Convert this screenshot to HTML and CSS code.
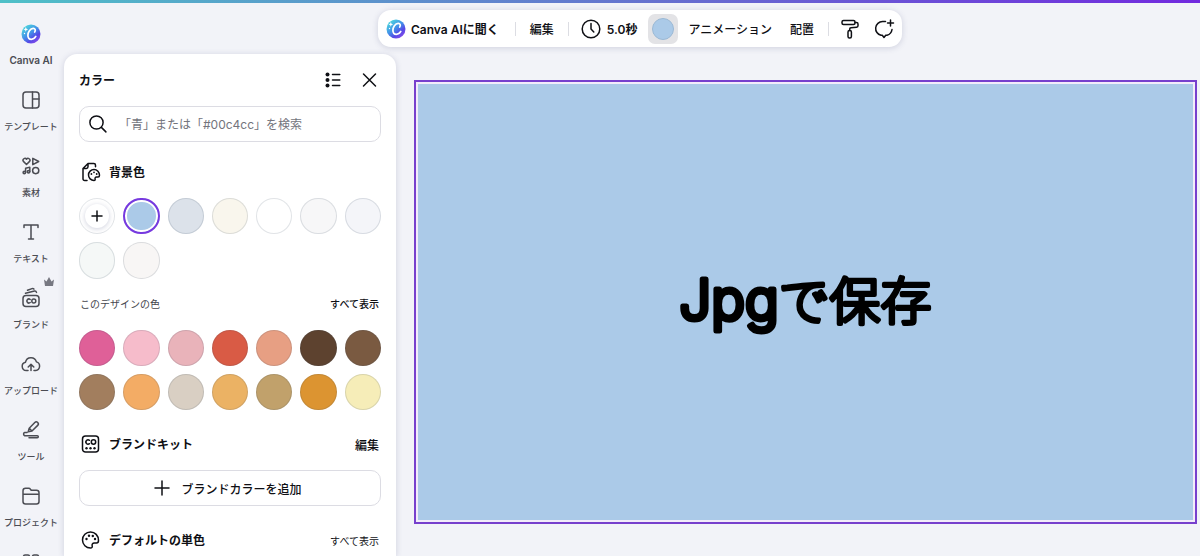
FILE: index.html
```html
<!DOCTYPE html>
<html lang="ja">
<head>
    <meta charset="utf-8">
    <meta name="viewport" content="width=device-width, initial-scale=1">
    <title>Jpgで保存</title>
    <link rel="stylesheet" href="styles.css">
</head>
<body>
    <svg class="defs" aria-hidden="true">
        <defs>
            <linearGradient id="aiFill" x1="0" y1="0" x2="0.8" y2="1">
                <stop offset="0.1" stop-color="#4fdcdc"/>
                <stop offset="0.5" stop-color="#4292e8"/>
                <stop offset="0.750" stop-color="#5548e6"/>
                <stop offset="1" stop-color="#8a4dea"/>
            </linearGradient>
            <symbol id="ai" viewBox="0 0 20 20">
                <circle cx="10" cy="10" r="9.500" fill="url(#aiFill)" stroke="none"/>
                <path d="M13.700 8c1.200-1.800.5-3.700-1.500-3.600-3 .2-5.300 3.700-5.300 6.800 0 2.500 1.400 4.100 3.500 4.100 1.900 0 3.400-1.200 4.400-2.900" fill="none" stroke="#fff" stroke-width="1.700" stroke-linecap="round"/>
                <path d="M4.800 3l.7 1.700 1.700.7-1.700.7-.7 1.700-.7-1.700-1.700-.7 1.700-.7z" fill="#fff" stroke="none"/>
                <circle cx="3.500" cy="9.500" r=".7" fill="#fff" stroke="none"/>
            </symbol>
        </defs>
    </svg>

    <div class="topline"></div>
    <div class="editor">
        <nav class="sidebar">
            <a class="side-item" href="#canva-ai">
                <svg class="icon"><use href="#ai" x="2" y="2" width="20" height="20"/></svg>
                <span class="side-label latin">Canva AI</span>
            </a>
            <a class="side-item" href="#templates">
                <svg class="icon" viewBox="0 0 24 24"><rect x="4" y="4" width="16" height="16" rx="3"/><path d="M13.500 4v16M13.500 11H20"/></svg>
                <span class="side-label">テンプレート</span>
            </a>
            <a class="side-item" href="#elements">
                <svg class="icon" viewBox="0 0 24 24"><path d="M7.500 10.500L4.400 7.400a1.900 1.900 0 0 1 3.100-2.200 1.900 1.900 0 0 1 3.100 2.200zM13.800 4.300v6.400L19.700 7.500z"/><circle cx="16.700" cy="16.600" r="3.100"/><path d="M6.600 18.500v-4.300l4.200-.9v4.400"/><circle cx="5.300" cy="18.500" r="1.200"/><circle cx="9.500" cy="17.800" r="1.200"/></svg>
                <span class="side-label">素材</span>
            </a>
            <a class="side-item" href="#text">
                <svg class="icon" viewBox="0 0 24 24"><path d="M5 7.500V5h14v2.500M12 5v14M9.500 19h5"/></svg>
                <span class="side-label">テキスト</span>
            </a>
            <a class="side-item" href="#brand">
                <svg class="icon" viewBox="0 0 24 24"><rect x="4" y="9.500" width="16" height="11" rx="3"/><path d="M6.500 7.200l9-2.200c1-.2 1.700.3 2 1.400M8.500 4.200l4.500-1.600c.8-.3 1.400-.1 1.900.5M11.200 13.500a2 2 0 1 0 0 3"/><circle cx="14.800" cy="15" r="2"/></svg>
                <svg class="crown" viewBox="0 0 12 12"><path d="M1 3.500l2.500 2L6 1l2.500 4.500 2.500-2L10 10H2z"/></svg>
                <span class="side-label">ブランド</span>
            </a>
            <a class="side-item" href="#uploads">
                <svg class="icon" viewBox="0 0 24 24"><path d="M9 18.500H7.300a4.200 4.200 0 0 1-.8-8.300 5.600 5.600 0 0 1 10.900-.3 4.400 4.400 0 0 1-.7 8.600H15M12 18.500v-6M9.200 15l2.800-2.800 2.800 2.800"/></svg>
                <span class="side-label">アップロード</span>
            </a>
            <a class="side-item" href="#tools">
                <svg class="icon" viewBox="0 0 24 24"><path d="M9.200 13.800l1-3.600 5.600-5.700a2 2 0 0 1 2.900 2.900L13 13zM10.500 10.500l2.200 2.200M8 14.500H5.700a1.700 1.700 0 0 0 0 3.200h12.600a1 1 0 0 1 0 2H10"/></svg>
                <span class="side-label">ツール</span>
            </a>
            <a class="side-item" href="#projects">
                <svg class="icon" viewBox="0 0 24 24"><path d="M4 17.500V6.800C4 5.300 5 4.300 6.500 4.300h3.200c.8 0 1.300.3 1.700.9l.8 1.100h5.300C19 6.300 20 7.300 20 8.800v8.700c0 1.500-1 2.500-2.500 2.500h-11C5 20 4 19 4 17.500zM4 10.300h16"/></svg>
                <span class="side-label">プロジェクト</span>
            </a>
            <a class="side-item" href="#apps" aria-label="アプリ">
                <svg class="icon" viewBox="0 0 24 24"><rect x="4.500" y="5" width="6" height="6" rx="1.500"/><rect x="13.500" y="5" width="6" height="6" rx="1.500"/><rect x="4.500" y="14" width="6" height="6" rx="1.500"/><rect x="13.500" y="14" width="6" height="6" rx="1.500"/></svg>
            </a>
        </nav>

        <div class="workspace">
            <header class="toolbar-row">
                <div class="toolbar">
                    <button class="tool ask"><svg class="ai-icon"><use href="#ai"/></svg>Canva AIに聞く</button>
                    <span class="divider"></span>
                    <button class="tool">編集</button>
                    <span class="divider"></span>
                    <button class="tool timing"><svg class="icon" viewBox="0 0 24 24"><circle cx="12" cy="12" r="8.800"/><path d="M12 6.500V12l2.800 3"/></svg>5.0秒</button>
                    <button class="color-tool" aria-label="背景色"><span class="color-dot"></span></button>
                    <button class="tool">アニメーション</button>
                    <button class="tool">配置</button>
                    <span class="divider"></span>
                    <button class="icon-button" aria-label="スタイルをコピー"><svg class="icon" viewBox="0 0 24 24"><rect x="4" y="3.500" width="13" height="4" rx="1.500"/><path d="M17 5.500h1.500c1 0 1.500.6 1.500 1.500v1.700c0 .9-.5 1.400-1.400 1.500l-5.600.5c-.9.100-1.300.5-1.300 1.300v1.500"/><rect x="10" y="13.500" width="3.400" height="7.500" rx="1.500"/></svg></button>
                    <button class="icon-button" aria-label="コメント"><svg class="icon" viewBox="0 0 24 24"><path d="M13.500 4.500H10.500a7 7 0 0 0-1.500 13.800h1.300l1.700 2.200 1.700-2.200H15a7 7 0 0 0 5-5.800M18.500 3v6M15.500 6h6"/></svg></button>
                </div>
            </header>

            <div class="content">
                <section class="panel">
                    <div class="panel-head">
                        <h1>カラー</h1>
                        <button class="icon-button" aria-label="リスト表示"><svg class="icon" viewBox="0 0 24 24"><path d="M11.500 6.500h7.300M11.500 12h7.300M11.500 17.500h7.300"/><g fill="currentColor" stroke="none"><circle cx="6.500" cy="6.500" r="2"/><circle cx="6.500" cy="12" r="2"/><circle cx="6.500" cy="17.500" r="2"/></g></svg></button>
                        <button class="icon-button" aria-label="閉じる"><svg class="icon" viewBox="0 0 24 24"><path d="M6.500 6l12 12M18.500 6l-12 12"/></svg></button>
                    </div>

                    <label class="search">
                        <svg class="icon" viewBox="0 0 24 24"><circle cx="10.500" cy="10.500" r="6.600"/><path d="M15.400 15.400l4.500 4.500"/></svg>
                        <input type="search" aria-label="色を検索" placeholder="「青」または「#00c4cc」を検索">
                    </label>

                    <div class="section-head">
                        <svg class="icon" viewBox="0 0 24 24"><path d="M8 20.500H5.700c-1.100 0-1.700-.6-1.700-1.700V8.500L9 3.500h5.800c1.100 0 1.700.6 1.700 1.700v1.500M4 8.500h3.300c1.100 0 1.700-.6 1.700-1.700V3.500"/><path d="M15 9.500a5.500 5.500 0 1 0 0 11c1 0 1.300-.6 1.100-1.400-.3-1.200.3-2 1.400-2H19c.9 0 1.500-.6 1.500-1.800 0-3.300-2.400-5.800-5.500-5.800z"/><g fill="currentColor" stroke="none"><circle cx="12.400" cy="14" r=".9"/><circle cx="15" cy="12.300" r=".9"/><circle cx="17.700" cy="14" r=".9"/></g></svg>
                        <h2>背景色</h2>
                    </div>
                    <div class="swatches">
                        <button class="swatch add" aria-label="色を追加"><span class="add-dot"><svg viewBox="0 0 12 12"><path d="M6 1v10M1 6h10"/></svg></span></button>
                        <button class="swatch sky selected" aria-label="水色"></button>
                        <button class="swatch mist" aria-label="グレーブルー"></button>
                        <button class="swatch cream" aria-label="クリーム"></button>
                        <button class="swatch white" aria-label="白"></button>
                        <button class="swatch smoke" aria-label="スモーク"></button>
                        <button class="swatch ghost" aria-label="薄いグレー"></button>
                        <button class="swatch mint" aria-label="薄いミント"></button>
                        <button class="swatch linen" aria-label="リネン"></button>
                    </div>

                    <div class="section-head sub">
                        <h3>このデザインの色</h3>
                        <button class="text-button small">すべて表示</button>
                    </div>
                    <div class="swatches">
                        <button class="swatch pink" aria-label="ピンク"></button>
                        <button class="swatch blossom" aria-label="桜色"></button>
                        <button class="swatch rose" aria-label="ローズ"></button>
                        <button class="swatch red" aria-label="赤"></button>
                        <button class="swatch salmon" aria-label="サーモン"></button>
                        <button class="swatch cocoa" aria-label="ココア"></button>
                        <button class="swatch brown" aria-label="茶色"></button>
                        <button class="swatch mocha" aria-label="モカ"></button>
                        <button class="swatch orange" aria-label="オレンジ"></button>
                        <button class="swatch stone" aria-label="ストーン"></button>
                        <button class="swatch honey" aria-label="はちみつ色"></button>
                        <button class="swatch khaki" aria-label="カーキ"></button>
                        <button class="swatch amber" aria-label="アンバー"></button>
                        <button class="swatch lemon" aria-label="レモン"></button>
                    </div>

                    <div class="section-head lower">
                        <svg class="icon" viewBox="0 0 24 24"><rect x="3.500" y="4" width="16" height="16" rx="3"/><path d="M10.500 8.300a2.200 2.200 0 1 0 0 3.400"/><circle cx="14.500" cy="10" r="2.200"/><g fill="currentColor" stroke="none"><circle cx="7.500" cy="16.200" r="1.200"/><circle cx="11.500" cy="16.200" r="1.200"/><circle cx="15.500" cy="16.200" r="1.200"/></g></svg>
                        <h2>ブランドキット</h2>
                        <button class="text-button">編集</button>
                    </div>
                    <button class="add-brand"><svg class="icon" viewBox="0 0 24 24"><path d="M12 5v14M5 12h14"/></svg>ブランドカラーを追加</button>

                    <div class="section-head lower">
                        <svg class="icon" viewBox="0 0 24 24"><path d="M11.500 4a8 8 0 1 0 0 16c1.500 0 2-.9 1.700-2-.5-1.800.4-3 2.100-3h2.200c1.300 0 2-.9 2-2.500 0-5-3.500-8.500-8-8.500z"/><g fill="currentColor" stroke="none"><circle cx="7.500" cy="11" r="1.200"/><circle cx="10" cy="7.800" r="1.200"/><circle cx="13.800" cy="8" r="1.200"/><circle cx="16" cy="11" r="1.200"/></g></svg>
                        <h2>デフォルトの単色</h2>
                        <button class="text-button small light">すべて表示</button>
                    </div>
                </section>

                <main class="stage">
                    <div class="page-frame">
                        <svg class="page" viewBox="0 0 776 436">
                            <text class="page-text" x="388" y="236" text-anchor="middle"><tspan class="page-latin">Jpg</tspan>で保存</text>
                        </svg>
                    </div>
                </main>
            </div>
        </div>
    </div>
</body>
</html>
```
FILE: styles.css
```css
* {
    box-sizing: border-box;
}

body {
    display: flex;
    flex-direction: column;
    height: 100vh;
    margin: 0;
    overflow: hidden;
    background-color: #f2f3f8;
    color: #0f1015;
    font-family: Inter, "Noto Sans CJK JP", sans-serif;
    font-size: 12px;
}

h1, h2, h3 {
    margin: 0;
}

button {
    padding: 0;
    border: 0;
    background: none;
    color: inherit;
    font: inherit;
    cursor: pointer;
}

.defs {
    position: absolute;
    width: 0;
    height: 0;
}

.icon {
    flex: none;
    width: 24px;
    height: 24px;
    fill: none;
    stroke: currentColor;
    stroke-width: 1.5;
    stroke-linecap: round;
    stroke-linejoin: round;
}

.topline {
    flex: none;
    height: 3px;
    background: linear-gradient(90deg, #4fc0c8, #6670cf 55%, #7229df);
}

.editor {
    display: flex;
    flex: 1;
    min-height: 0;
}

/* Left navigation */
.sidebar {
    flex: none;
    width: 62px;
    padding-top: 13px;
    overflow: hidden;
}

.side-item {
    position: relative;
    display: flex;
    flex-direction: column;
    align-items: center;
    gap: 6px;
    height: 66px;
    padding-top: 6px;
    color: #4b4c53;
    text-decoration: none;
}

.side-label {
    font-size: 9px;
    font-weight: 500;
    line-height: 17px;
    white-space: nowrap;
}

.latin {
    font-size: 10px;
    font-weight: 600;
}

.crown {
    position: absolute;
    top: -4px;
    right: 7px;
    width: 12px;
    height: 12px;
    fill: #777881;
}

.workspace {
    display: flex;
    flex: 1;
    flex-direction: column;
    min-width: 0;
}

/* Toolbar */
.toolbar-row {
    display: flex;
    flex: none;
    justify-content: center;
    padding: 7px 0 7px 18px;
}

.toolbar {
    display: flex;
    align-items: center;
    height: 37px;
    padding: 0 6px 0 8px;
    border-radius: 13px;
    background-color: #fff;
    box-shadow: 0 1px 6px rgba(64, 70, 120, 0.2);
    font-weight: 500;
    white-space: nowrap;
}

.tool {
    display: flex;
    align-items: center;
    padding: 0 9px;
}

.ask {
    gap: 5px;
    padding: 0 11px 0 0;
    font-weight: 600;
}

.timing {
    gap: 4px;
    padding: 0 11px 0 5px;
    font-weight: 600;
}

.ai-icon {
    width: 20px;
    height: 20px;
}

.divider {
    width: 1px;
    height: 14px;
    margin: 0 5px;
    background-color: #dcdde3;
}

.color-tool {
    display: flex;
    align-items: center;
    justify-content: center;
    width: 30px;
    height: 30px;
    margin-right: 1px;
    border-radius: 7px;
    background-color: #e3e3e6;
}

.color-dot {
    width: 22px;
    height: 22px;
    border: 1px solid #9bb9d5;
    border-radius: 50%;
    background-color: #abcae8;
}

.icon-button {
    display: flex;
}

.toolbar .icon-button {
    margin-left: 4px;
}

.toolbar .icon-button + .icon-button {
    margin-left: 10px;
}

.content {
    display: flex;
    flex: 1;
    min-height: 0;
}

/* Color panel */
.panel {
    flex: none;
    width: 332px;
    margin-left: 2px;
    padding: 14px 15px 0;
    overflow: hidden;
    border-radius: 13px 13px 0 0;
    background-color: #fff;
    box-shadow: 0 1px 6px rgba(64, 70, 120, 0.2);
}

.panel-head {
    display: flex;
    align-items: center;
    gap: 12px;
    height: 24px;
}

.panel-head h1,
.section-head h2 {
    flex: 1;
    padding-bottom: 2px;
    font-size: 12px;
    font-weight: 600;
}

.search {
    display: flex;
    align-items: center;
    gap: 9px;
    height: 36px;
    margin-top: 14px;
    padding: 0 6px;
    border: 1px solid #dcdce3;
    border-radius: 10px;
}

.search input {
    flex: 1;
    min-width: 0;
    padding: 0;
    border: 0;
    outline: 0;
    background: none;
    font: inherit;
}

.search input::placeholder {
    color: #73747c;
}

.section-head {
    display: flex;
    align-items: center;
    gap: 6px;
    height: 24px;
    margin: 18px 2px 14px 0;
}

.section-head h3 {
    flex: 1;
    color: #45464d;
    font-size: 10px;
    font-weight: 400;
}

.sub {
    margin: 13px 2px 14px 1px;
}

.lower {
    margin-top: 22px;
}

.text-button {
    font-weight: 500;
}

.small {
    font-size: 10px;
}

.light {
    font-weight: 400;
}

.swatches {
    display: grid;
    grid-template-columns: repeat(7, 1fr);
    gap: 8px;
}

.swatch {
    aspect-ratio: 1;
    border: 1px solid rgba(57, 76, 96, 0.15);
    border-radius: 50%;
}

.add {
    display: flex;
    align-items: center;
    justify-content: center;
}

.add-dot {
    display: flex;
    align-items: center;
    justify-content: center;
    width: 24px;
    height: 24px;
    border-radius: 50%;
    box-shadow: 0 1px 5px rgba(64, 70, 120, 0.25);
}

.add-dot svg {
    width: 12px;
    height: 12px;
    stroke: currentColor;
    stroke-width: 1.5;
    stroke-linecap: round;
}

.selected {
    border: 2px solid #7739df;
    box-shadow: inset 0 0 0 2px #fff;
}

.sky { background-color: #abcae8; }
.mist { background-color: #dce2ea; }
.cream { background-color: #f9f6ed; }
.white { background-color: #fff; }
.smoke { background-color: #f7f7f8; }
.ghost { background-color: #f4f5f9; }
.mint { background-color: #f5f8f7; }
.linen { background-color: #f8f6f5; }
.pink { background-color: #df6098; }
.blossom { background-color: #f6bccb; }
.rose { background-color: #e9b3ba; }
.red { background-color: #d95b45; }
.salmon { background-color: #e79f83; }
.cocoa { background-color: #5d422f; }
.brown { background-color: #7a5a41; }
.mocha { background-color: #a27e5e; }
.orange { background-color: #f3ac65; }
.stone { background-color: #d9cfc3; }
.honey { background-color: #ebb264; }
.khaki { background-color: #c1a16b; }
.amber { background-color: #dc9431; }
.lemon { background-color: #f6edb8; }

.add-brand {
    display: flex;
    align-items: center;
    justify-content: center;
    gap: 7px;
    width: 100%;
    height: 36px;
    padding-right: 8px;
    border: 1px solid #dcdce3;
    border-radius: 10px;
    font-weight: 500;
}

/* Canvas */
.stage {
    flex: 1;
    min-width: 0;
    padding: 26px 3px 0 18px;
}

.page-frame {
    padding: 2px;
    border: 2px solid #7740cd;
    background-color: #f2ecfa;
}

.page {
    display: block;
    width: 100%;
    aspect-ratio: 16 / 9;
    background-color: #abcae8;
}

.page-text {
    fill: #000;
    stroke: #000;
    stroke-width: 4px;
    stroke-linejoin: round;
    font-family: Inter, "Noto Sans CJK JP", sans-serif;
    font-size: 51px;
    font-weight: 300;
}

.page-latin {
    font-size: 56px;
    stroke-width: 5px;
}
```
